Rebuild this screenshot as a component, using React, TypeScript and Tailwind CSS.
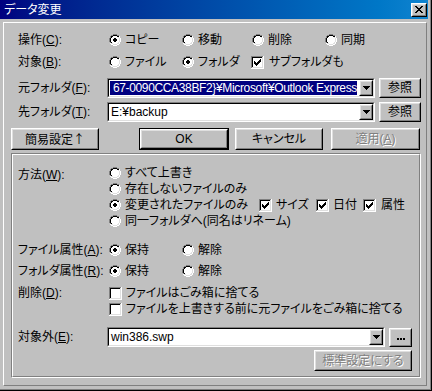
import React from "react";

const PAL: Record<string, string> = {
  G: "#808080",
  K: "#000000",
  W: "#ffffff",
  w: "#ffffff",
  L: "#dfdfdf",
};

// pixel drawings for the classic controls
function Pixels({ rows, className = "" }: { rows: string[]; className?: string }) {
  const rects: React.ReactNode[] = [];
  rows.forEach((r, y) =>
    r.split("").forEach((c, x) => {
      if (PAL[c]) rects.push(<rect key={`${x}-${y}`} x={x} y={y} width={1} height={1} fill={PAL[c]} />);
    })
  );
  const w = rows[0].length;
  const h = rows.length;
  return (
    <svg width={w} height={h} viewBox={`0 0 ${w} ${h}`} shapeRendering="crispEdges" className={`shrink-0 ${className}`}>
      {rects}
    </svg>
  );
}

const RADIO_OFF = [
  "....GGGG....",
  "..GGKKKKGG..",
  ".GKKwwwwKKW.",
  ".GKwwwwwwLW.",
  "GKwwwwwwwwLW",
  "GKwwwwwwwwLW",
  "GKwwwwwwwwLW",
  "GKwwwwwwwwLW",
  ".GKwwwwwwLW.",
  ".WLLwwwwLLW.",
  "..WWLLLLWW..",
  "....WWWW....",
];

const RADIO_ON = RADIO_OFF.map((r, y) => {
  const dot: Record<number, string> = { 4: "wKKw", 5: "KKKK", 6: "KKKK", 7: "wKKw" };
  if (!dot[y]) return r;
  return r.slice(0, 4) + dot[y] + r.slice(8);
});

const CHECK = [
  "......K",
  ".....KK",
  "K...KKK",
  "KK.KKK.",
  "KKKKK..",
  ".KKK...",
  "..K....",
];

function checkRows(checked: boolean) {
  const rows: string[] = [];
  for (let y = 0; y < 13; y++) {
    let s = "";
    for (let x = 0; x < 13; x++) {
      let c = "w";
      if (x === 12 || y === 12) c = "W";
      else if (x === 0 || y === 0) c = "G";
      else if (x === 11 || y === 11) c = "L";
      else if (x === 1 || y === 1) c = "K";
      if (checked && x >= 3 && x < 10 && y >= 3 && y < 10 && CHECK[y - 3][x - 3] === "K") c = "K";
      s += c;
    }
    rows.push(s);
  }
  return rows;
}

const CLOSE_X = ["KK....KK", ".KK..KK.", "..KKKK..", "...KK...", "..KKKK..", ".KK..KK.", "KK....KK"];
const ARROW = ["KKKKKKK", ".KKKKK.", "..KKK..", "...K..."];
const DOTS = ["KK.KK.KK", "KK.KK.KK"];

function Radio({ checked, children, className = "" }: { checked?: boolean; children: React.ReactNode; className?: string }) {
  return (
    <div className={`flex items-center gap-[4px] ${className}`}>
      <Pixels rows={checked ? RADIO_ON : RADIO_OFF} />
      <span className="whitespace-nowrap leading-[14px]">{children}</span>
    </div>
  );
}

function Check({ checked, children, className = "" }: { checked?: boolean; children: React.ReactNode; className?: string }) {
  return (
    <div className={`flex items-center gap-[4px] ${className}`}>
      <Pixels rows={checkRows(!!checked)} />
      <span className="whitespace-nowrap leading-[14px]">{children}</span>
    </div>
  );
}

function Raised({ children, className = "" }: { children?: React.ReactNode; className?: string }) {
  return (
    <div className={`border border-t-white border-l-white border-b-black border-r-black bg-[#c0c0c0] ${className}`}>
      <div className="h-full border border-t-[#dfdfdf] border-l-[#dfdfdf] border-b-[#808080] border-r-[#808080] flex items-center justify-center">
        {children}
      </div>
    </div>
  );
}

function Btn({
  children,
  className = "",
  isDefault,
  disabled,
}: {
  children: React.ReactNode;
  className?: string;
  isDefault?: boolean;
  disabled?: boolean;
}) {
  const label = (
    <span className={`whitespace-nowrap leading-[14px] ${disabled ? "text-[#808080] [text-shadow:1px_1px_0_#ffffff]" : ""}`}>
      {children}
    </span>
  );
  if (isDefault) {
    return (
      <div className={`border border-black ${className}`}>
        <Raised className="h-full">{label}</Raised>
      </div>
    );
  }
  return <Raised className={className}>{label}</Raised>;
}

function Combo({ children, className = "" }: { children: React.ReactNode; className?: string }) {
  return (
    <div className={`border border-t-[#808080] border-l-[#808080] border-b-white border-r-white ${className}`}>
      <div className="h-full border border-t-black border-l-black border-b-[#dfdfdf] border-r-[#dfdfdf] bg-white flex">
        <div className="flex-1 min-w-0 flex items-center px-[1px] py-[1px] overflow-hidden">{children}</div>
        <Raised className="w-[14px] h-full shrink-0">
          <Pixels rows={ARROW} />
        </Raised>
      </div>
    </div>
  );
}

function U({ children }: { children: React.ReactNode }) {
  return <span className="underline underline-offset-[1px]">{children}</span>;
}

export default function App() {
  return (
    <div className="w-[432px] h-[391px] bg-[#c0c0c0] border-r border-b border-black text-[12px] text-black font-['Liberation_Sans','Noto_Sans_CJK_JP',sans-serif] [font-feature-settings:'palt'] select-none">
      <div className="h-full border-r border-b border-[#808080] pr-[2px] pb-[2px] flex flex-col">
        {/* Title bar */}
        <div className="h-[19px] shrink-0 bg-linear-to-r from-[#000080] to-[#1084d0] flex items-center pl-[4px] pr-[1px]">
          <span className="text-white leading-[14px] flex-1">データ変更</span>
          <Raised className="w-[16px] h-[14px]">
            <Pixels rows={CLOSE_X} />
          </Raised>
        </div>

        {/* Client */}
        <div className="flex-1 pt-[3px] pl-[3px] pr-[1px] pb-[1px] flex">
          <div className="flex-1 border border-t-white border-l-white border-b-[#808080] border-r-[#808080] flex flex-col">
            {/* 操作 */}
            <div className="mt-[7px] h-[20px] flex items-center pl-[14px]">
              <div className="w-[91px] leading-[14px]">
                操作(<U>C</U>):
              </div>
              <Radio checked className="w-[73px]">コピー</Radio>
              <Radio className="w-[70px]">移動</Radio>
              <Radio className="w-[73px]">削除</Radio>
              <Radio>同期</Radio>
            </div>

            {/* 対象 */}
            <div className="mt-[2px] h-[20px] flex items-center pl-[14px]">
              <div className="w-[91px] leading-[14px]">
                対象(<U>B</U>):
              </div>
              <Radio className="w-[73px]">ファイル</Radio>
              <Radio checked className="w-[69px]">フォルダ</Radio>
              <Check checked className="gap-[5px]">サブフォルダも</Check>
            </div>

            {/* 元フォルダ */}
            <div className="mt-[6px] h-[20px] flex items-center pl-[14px]">
              <div className="w-[89px] leading-[14px]">
                元フォルダ(<U>F</U>):
              </div>
              <Combo className="w-[268px] h-[20px] shrink-0">
                <div className="flex-1 min-w-0 h-full bg-[#000080] text-white flex items-center justify-end overflow-hidden mr-[1px]">
                  <span className="shrink-0 whitespace-nowrap leading-[14px] tracking-[-0.35px]">
                    67-0090CCA38BF2{"}"}¥Microsoft¥Outlook Express
                  </span>
                </div>
              </Combo>
              <Btn className="ml-[4px] w-[42px] h-[20px]">参照</Btn>
            </div>

            {/* 先フォルダ */}
            <div className="mt-[4px] h-[20px] flex items-center pl-[14px]">
              <div className="w-[89px] leading-[14px]">
                先フォルダ(<U>T</U>):
              </div>
              <Combo className="w-[268px] h-[20px] shrink-0">
                <span className="whitespace-nowrap leading-[14px] pl-[1px]">E:¥backup</span>
              </Combo>
              <Btn className="ml-[4px] w-[42px] h-[20px]">参照</Btn>
            </div>

            {/* buttons */}
            <div className="mt-[6px] h-[22px] flex pl-[7px]">
              <Btn className="w-[88px] h-full">
                簡易設定<span className="font-['Noto_Sans_CJK_JP',sans-serif]">↑</span>
              </Btn>
              <Btn isDefault className="ml-[40px] w-[90px] h-full">
                OK
              </Btn>
              <Btn className="ml-[6px] w-[88px] h-full">キャンセル</Btn>
              <Btn disabled className="ml-[8px] w-[89px] h-full">
                適用(<U>A</U>)
              </Btn>
            </div>

            {/* Group */}
            <div className="mt-[3px] ml-[7px] w-[410px] h-[225px] border border-t-[#808080] border-l-[#808080] border-b-white border-r-white">
              <div className="h-full border border-t-white border-l-white border-b-[#808080] border-r-[#808080] flex flex-col">
                {/* 方法 */}
                <div className="mt-[10px] flex pl-[5px]">
                  <div className="w-[91px] h-[16px] flex items-center pt-[3px] leading-[14px]">
                    方法(<U>W</U>):
                  </div>
                  <div className="flex flex-col">
                    <Radio className="h-[16px]">すべて上書き</Radio>
                    <Radio className="h-[16px]">存在しないファイルのみ</Radio>
                    <div className="h-[16px] flex items-center">
                      <Radio checked className="w-[150px]">
                        変更されたファイルのみ
                      </Radio>
                      <Check checked className="w-[57px]">
                        サイズ
                      </Check>
                      <Check checked className="w-[47px]">
                        日付
                      </Check>
                      <Check checked className="gap-[5px]">
                        属性
                      </Check>
                    </div>
                    <Radio className="h-[16px]">同一フォルダへ(同名はリネーム)</Radio>
                  </div>
                </div>

                {/* ファイル属性 */}
                <div className="mt-[11px] h-[20px] flex items-center pl-[5px]">
                  <div className="w-[91px] leading-[14px]">
                    ファイル属性(<U>A</U>):
                  </div>
                  <Radio checked className="w-[73px]">保持</Radio>
                  <Radio>解除</Radio>
                </div>

                {/* フォルダ属性 */}
                <div className="mt-[1px] h-[20px] flex items-center pl-[5px]">
                  <div className="w-[91px] leading-[14px]">
                    フォルダ属性(<U>R</U>):
                  </div>
                  <Radio checked className="w-[73px]">保持</Radio>
                  <Radio>解除</Radio>
                </div>

                {/* 削除 */}
                <div className="mt-[4px] flex pl-[5px]">
                  <div className="w-[91px] h-[16px] flex items-center leading-[14px]">
                    削除(<U>D</U>):
                  </div>
                  <div className="flex flex-col">
                    <Check className="h-[16px]">ファイルはごみ箱に捨てる</Check>
                    <Check className="h-[16px]">ファイルを上書きする前に元ファイルをごみ箱に捨てる</Check>
                  </div>
                </div>

                {/* 対象外 */}
                <div className="mt-[10px] h-[20px] flex items-center pl-[5px]">
                  <div className="w-[89px] leading-[14px]">
                    対象外(<U>E</U>):
                  </div>
                  <Combo className="w-[278px] h-[20px] shrink-0">
                    <span className="whitespace-nowrap leading-[14px] pl-[1px]">win386.swp</span>
                  </Combo>
                  <Raised className="ml-[4px] w-[23px] h-[19px]">
                    <Pixels rows={DOTS} className="mt-[3px]" />
                  </Raised>
                </div>

                {/* 標準設定 */}
                <div className="mt-[3px] flex justify-end pr-[7px]">
                  <Btn disabled className="w-[98px] h-[21px]">
                    標準設定にする
                  </Btn>
                </div>
              </div>
            </div>
          </div>
        </div>
      </div>
    </div>
  );
}
